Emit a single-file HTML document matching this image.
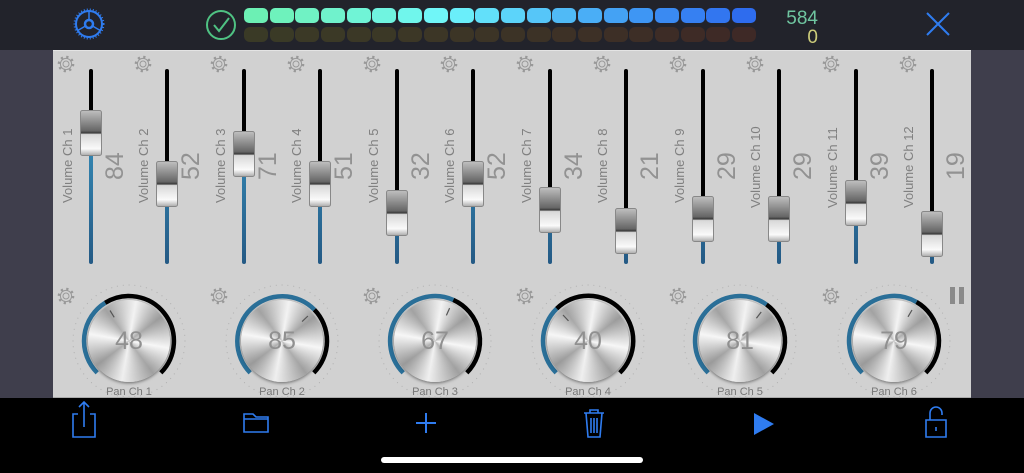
<!DOCTYPE html>
<html><head><meta charset="utf-8"><style>
*{margin:0;padding:0;box-sizing:border-box}
body{width:1024px;height:473px;background:#000;position:relative;overflow:hidden;font-family:"Liberation Sans",sans-serif}
.abs{position:absolute}
.knob{position:absolute;width:82px;height:82px;border-radius:50%;top:300px;
background:radial-gradient(circle,rgba(255,255,255,.25),rgba(255,255,255,0) 60%),conic-gradient(from 10deg,#f2f2f2,#9c9c9c 12%,#f6f6f6 25%,#a0a0a0 37%,#efefef 50%,#9a9a9a 62%,#f6f6f6 75%,#a2a2a2 87%,#f2f2f2);
box-shadow:0 1px 3px rgba(0,0,0,.5);color:#909090;font-size:25px;text-align:center;line-height:82px}
</style></head><body>
<div class="abs" style="left:0;top:0;width:1024px;height:50px;background:#22232b"></div>
<div class="abs" style="left:0;top:50px;width:53px;height:348px;background:#3f3e4c"></div>
<div class="abs" style="left:971px;top:50px;width:53px;height:348px;background:#3f3e4c"></div>
<div class="abs" style="left:53px;top:50px;width:918px;height:348px;background:#d1d1d1;border-top:1px solid #e4e4e4;border-bottom:1px solid #aaa"></div>

<svg class="abs" style="left:0;top:0" width="1024" height="473" viewBox="0 0 1024 473">
<defs>
<linearGradient id="tg" x1="0" y1="0" x2="0" y2="1">
<stop offset="0" stop-color="#c0c0c0"/><stop offset=".45" stop-color="#666"/><stop offset=".5" stop-color="#3a3a3a"/><stop offset=".53" stop-color="#d8d8d8"/><stop offset=".85" stop-color="#fafafa"/><stop offset="1" stop-color="#aaa"/></linearGradient>
<linearGradient id="bl" gradientUnits="userSpaceOnUse" x1="0" y1="100" x2="0" y2="263"><stop offset="0" stop-color="#3a98c4"/><stop offset="1" stop-color="#245a85"/></linearGradient>
<symbol id="th" viewBox="0 0 22 46"><rect x=".5" y=".5" width="21" height="45" rx="2" fill="url(#tg)" stroke="#888"/></symbol>
<symbol id="gr" viewBox="-10 -10 20 20"><circle r="7" fill="none" stroke="#999" stroke-width="2.6" stroke-dasharray="2.2 3.3"/><circle r="5.6" fill="#d1d1d1" stroke="#999" stroke-width="1"/><circle r="3" fill="none" stroke="#999" stroke-width="1"/></symbol>
</defs>
<g>
<rect x="244" y="8" width="24" height="15" rx="5" fill="#6cf0b4"/><rect x="270" y="8" width="24" height="15" rx="5" fill="#6ef2bc"/><rect x="295" y="8" width="24" height="15" rx="5" fill="#70f2c4"/><rect x="321" y="8" width="24" height="15" rx="5" fill="#70f2cc"/><rect x="347" y="8" width="24" height="15" rx="5" fill="#70f4d6"/><rect x="372" y="8" width="24" height="15" rx="5" fill="#70f4e0"/><rect x="398" y="8" width="24" height="15" rx="5" fill="#70f6ec"/><rect x="424" y="8" width="24" height="15" rx="5" fill="#70f6f8"/><rect x="450" y="8" width="24" height="15" rx="5" fill="#6aeefa"/><rect x="475" y="8" width="24" height="15" rx="5" fill="#62e0fa"/><rect x="501" y="8" width="24" height="15" rx="5" fill="#5cd4fa"/><rect x="527" y="8" width="24" height="15" rx="5" fill="#56c6f8"/><rect x="552" y="8" width="24" height="15" rx="5" fill="#50baf6"/><rect x="578" y="8" width="24" height="15" rx="5" fill="#4aaef6"/><rect x="604" y="8" width="24" height="15" rx="5" fill="#44a2f4"/><rect x="629" y="8" width="24" height="15" rx="5" fill="#3e96f4"/><rect x="655" y="8" width="24" height="15" rx="5" fill="#3a8af2"/><rect x="681" y="8" width="24" height="15" rx="5" fill="#3680f2"/><rect x="706" y="8" width="24" height="15" rx="5" fill="#3276f0"/><rect x="732" y="8" width="24" height="15" rx="5" fill="#2e6cee"/>
<rect x="244" y="27" width="24" height="15" rx="6" fill="#3a3a26"/><rect x="270" y="27" width="24" height="15" rx="6" fill="#3a3a26"/><rect x="295" y="27" width="24" height="15" rx="6" fill="#3b3926"/><rect x="321" y="27" width="24" height="15" rx="6" fill="#3b3926"/><rect x="347" y="27" width="24" height="15" rx="6" fill="#3b3826"/><rect x="372" y="27" width="24" height="15" rx="6" fill="#3b3826"/><rect x="398" y="27" width="24" height="15" rx="6" fill="#3c3726"/><rect x="424" y="27" width="24" height="15" rx="6" fill="#3c3626"/><rect x="450" y="27" width="24" height="15" rx="6" fill="#3c3526"/><rect x="475" y="27" width="24" height="15" rx="6" fill="#3c3426"/><rect x="501" y="27" width="24" height="15" rx="6" fill="#3c3326"/><rect x="527" y="27" width="24" height="15" rx="6" fill="#3c3226"/><rect x="552" y="27" width="24" height="15" rx="6" fill="#3d3126"/><rect x="578" y="27" width="24" height="15" rx="6" fill="#3d3026"/><rect x="604" y="27" width="24" height="15" rx="6" fill="#3d2f26"/><rect x="629" y="27" width="24" height="15" rx="6" fill="#3d2e26"/><rect x="655" y="27" width="24" height="15" rx="6" fill="#3d2c26"/><rect x="681" y="27" width="24" height="15" rx="6" fill="#3e2b26"/><rect x="706" y="27" width="24" height="15" rx="6" fill="#3e2a26"/><rect x="732" y="27" width="24" height="15" rx="6" fill="#3e2926"/>
</g>
<g transform="translate(89,24)" fill="none" stroke="#2f7cf0">
<circle r="13" stroke-width="2"/><circle r="14.5" stroke-width="2" stroke-dasharray="1 2"/><circle r="4" stroke-width="2.5"/>
<line x1="0" y1="-4" x2="0" y2="-13" stroke-width="1.5"/><line x1="3.5" y1="2" x2="11.3" y2="6.5" stroke-width="1.5"/><line x1="-3.5" y1="2" x2="-11.3" y2="6.5" stroke-width="1.5"/></g>
<g transform="translate(221,25)" fill="none" stroke="#4fc283" stroke-width="2"><circle r="14"/><path d="M-7,0 L-2,6 L8,-7"/></g>
<text x="818" y="24" font-size="19" fill="#6fc5a0" text-anchor="end">584</text>
<text x="818" y="43" font-size="19" fill="#cccc7a" text-anchor="end">0</text>
<path d="M927,13 L949,35 M949,13 L927,35" stroke="#2f7cf0" stroke-width="2"/>

<use href="#gr" x="56" y="54" width="20" height="20"/><use href="#gr" x="133" y="54" width="20" height="20"/><use href="#gr" x="209" y="54" width="20" height="20"/><use href="#gr" x="286" y="54" width="20" height="20"/><use href="#gr" x="362" y="54" width="20" height="20"/><use href="#gr" x="439" y="54" width="20" height="20"/><use href="#gr" x="515" y="54" width="20" height="20"/><use href="#gr" x="592" y="54" width="20" height="20"/><use href="#gr" x="668" y="54" width="20" height="20"/><use href="#gr" x="745" y="54" width="20" height="20"/><use href="#gr" x="821" y="54" width="20" height="20"/><use href="#gr" x="898" y="54" width="20" height="20"/>
<use href="#gr" x="56" y="286" width="20" height="20"/><use href="#gr" x="209" y="286" width="20" height="20"/><use href="#gr" x="362" y="286" width="20" height="20"/><use href="#gr" x="515" y="286" width="20" height="20"/><use href="#gr" x="668" y="286" width="20" height="20"/><use href="#gr" x="821" y="286" width="20" height="20"/>
<rect x="950" y="287" width="5" height="17" fill="#8a8a8a"/><rect x="959" y="287" width="5" height="17" fill="#8a8a8a"/>

<g stroke-width="4" stroke-linecap="round">
<line x1="91" y1="71" x2="91" y2="133" stroke="#000"/><line x1="91" y1="133" x2="91" y2="262" stroke="url(#bl)"/>
<line x1="167" y1="71" x2="167" y2="184" stroke="#000"/><line x1="167" y1="184" x2="167" y2="262" stroke="url(#bl)"/>
<line x1="244" y1="71" x2="244" y2="154" stroke="#000"/><line x1="244" y1="154" x2="244" y2="262" stroke="url(#bl)"/>
<line x1="320" y1="71" x2="320" y2="184" stroke="#000"/><line x1="320" y1="184" x2="320" y2="262" stroke="url(#bl)"/>
<line x1="397" y1="71" x2="397" y2="213" stroke="#000"/><line x1="397" y1="213" x2="397" y2="262" stroke="url(#bl)"/>
<line x1="473" y1="71" x2="473" y2="184" stroke="#000"/><line x1="473" y1="184" x2="473" y2="262" stroke="url(#bl)"/>
<line x1="550" y1="71" x2="550" y2="210" stroke="#000"/><line x1="550" y1="210" x2="550" y2="262" stroke="url(#bl)"/>
<line x1="626" y1="71" x2="626" y2="231" stroke="#000"/><line x1="626" y1="231" x2="626" y2="262" stroke="url(#bl)"/>
<line x1="703" y1="71" x2="703" y2="219" stroke="#000"/><line x1="703" y1="219" x2="703" y2="262" stroke="url(#bl)"/>
<line x1="779" y1="71" x2="779" y2="219" stroke="#000"/><line x1="779" y1="219" x2="779" y2="262" stroke="url(#bl)"/>
<line x1="856" y1="71" x2="856" y2="203" stroke="#000"/><line x1="856" y1="203" x2="856" y2="262" stroke="url(#bl)"/>
<line x1="932" y1="71" x2="932" y2="234" stroke="#000"/><line x1="932" y1="234" x2="932" y2="262" stroke="url(#bl)"/>
</g>
<use href="#th" x="80" y="110" width="22" height="46"/><use href="#th" x="156" y="161" width="22" height="46"/><use href="#th" x="233" y="131" width="22" height="46"/><use href="#th" x="309" y="161" width="22" height="46"/><use href="#th" x="386" y="190" width="22" height="46"/><use href="#th" x="462" y="161" width="22" height="46"/><use href="#th" x="539" y="187" width="22" height="46"/><use href="#th" x="615" y="208" width="22" height="46"/><use href="#th" x="692" y="196" width="22" height="46"/><use href="#th" x="768" y="196" width="22" height="46"/><use href="#th" x="845" y="180" width="22" height="46"/><use href="#th" x="921" y="211" width="22" height="46"/>
<g font-size="13" fill="#808080">
<text transform="translate(72,203) rotate(-90)">Volume Ch 1</text><text transform="translate(148,203) rotate(-90)">Volume Ch 2</text><text transform="translate(225,203) rotate(-90)">Volume Ch 3</text><text transform="translate(301,203) rotate(-90)">Volume Ch 4</text><text transform="translate(378,203) rotate(-90)">Volume Ch 5</text><text transform="translate(454,203) rotate(-90)">Volume Ch 6</text><text transform="translate(531,203) rotate(-90)">Volume Ch 7</text><text transform="translate(607,203) rotate(-90)">Volume Ch 8</text><text transform="translate(684,203) rotate(-90)">Volume Ch 9</text><text transform="translate(760,208) rotate(-90)">Volume Ch 10</text><text transform="translate(837,208) rotate(-90)">Volume Ch 11</text><text transform="translate(913,208) rotate(-90)">Volume Ch 12</text>
</g>
<g font-size="25" fill="#929292">
<text transform="translate(123,180) rotate(-90)">84</text><text transform="translate(199,180) rotate(-90)">52</text><text transform="translate(276,180) rotate(-90)">71</text><text transform="translate(352,180) rotate(-90)">51</text><text transform="translate(429,180) rotate(-90)">32</text><text transform="translate(505,180) rotate(-90)">52</text><text transform="translate(582,180) rotate(-90)">34</text><text transform="translate(658,180) rotate(-90)">21</text><text transform="translate(735,180) rotate(-90)">29</text><text transform="translate(811,180) rotate(-90)">29</text><text transform="translate(888,180) rotate(-90)">39</text><text transform="translate(964,180) rotate(-90)">19</text>
</g>

<g fill="none" stroke="#b4b4b4" stroke-width="1.2" stroke-linecap="round" stroke-dasharray="0 5.86">
<circle cx="129" cy="341" r="56"/><circle cx="282" cy="341" r="56"/><circle cx="435" cy="341" r="56"/><circle cx="588" cy="341" r="56"/><circle cx="740" cy="341" r="56"/><circle cx="894" cy="341" r="56"/>
</g>
<g fill="none" stroke-width="4.5">
<path d="M97.2,372.8 A45,45 0 0 1 105.2,302.8" stroke="#2a6f98"/><path d="M105.2,302.8 A45,45 0 0 1 160.8,372.8" stroke="#000"/>
<path d="M250.2,372.8 A45,45 0 1 1 314.4,309.7" stroke="#2a6f98"/><path d="M314.4,309.7 A45,45 0 0 1 313.8,372.8" stroke="#000"/>
<path d="M403.2,372.8 A45,45 0 0 1 453.3,299.9" stroke="#2a6f98"/><path d="M453.3,299.9 A45,45 0 0 1 466.8,372.8" stroke="#000"/>
<path d="M556.2,372.8 A45,45 0 0 1 556.7,308.6" stroke="#2a6f98"/><path d="M556.7,308.6 A45,45 0 0 1 619.8,372.8" stroke="#000"/>
<path d="M708.2,372.8 A45,45 0 0 1 766.5,304.6" stroke="#2a6f98"/><path d="M766.5,304.6 A45,45 0 0 1 771.8,372.8" stroke="#000"/>
<path d="M862.2,372.8 A45,45 0 0 1 916.5,302" stroke="#2a6f98"/><path d="M916.5,302 A45,45 0 0 1 925.8,372.8" stroke="#000"/>
</g>
<g font-size="11" fill="#777" text-anchor="middle">
<text x="129" y="395">Pan Ch 1</text><text x="282" y="395">Pan Ch 2</text><text x="435" y="395">Pan Ch 3</text><text x="588" y="395">Pan Ch 4</text><text x="740" y="395">Pan Ch 5</text><text x="894" y="395">Pan Ch 6</text>
</g>
</svg>

<div class="knob" style="left:88px">48</div>
<div class="knob" style="left:241px">85</div>
<div class="knob" style="left:394px">67</div>
<div class="knob" style="left:547px">40</div>
<div class="knob" style="left:699px">81</div>
<div class="knob" style="left:853px">79</div>

<svg class="abs" style="left:0;top:0" width="1024" height="473" viewBox="0 0 1024 473">
<g stroke="#555" stroke-width="1.2">
<line x1="114.2" y1="317.3" x2="110" y2="310.5"/><line x1="302.1" y1="321.6" x2="307.9" y2="316"/><line x1="446.4" y1="315.4" x2="449.6" y2="308.1"/><line x1="568.5" y1="320.9" x2="563" y2="315"/><line x1="756.4" y1="318.3" x2="761.2" y2="312"/><line x1="908" y1="316.8" x2="912" y2="310"/>
</g>
<g fill="none" stroke="#2f7cf0" stroke-width="1.6">
<path d="M78,414 H73 V437 H95 V414 H90 M84,427 V402 M79,407 L84,402 L89,407"/>
<path d="M244,414 V432 H268 V417 H256 L253,414 Z M244,419 H268"/>
<path d="M426,413 V433 M416,423 H436" stroke-width="2"/>
<path d="M584,413 H604 M590,413 V410 H598 V413 M586,413 L588,437 H600 L602,413 M591,418 V433 M594,418 V433 M597,418 V433"/>
<path d="M926,420 H946 V437 H926 Z M930,420 V413 A6,6 0 0 1 942,413 V415 M936,427 V431"/>
</g>
<path d="M754,413 L774,424 L754,435 Z" fill="#2f7cf0"/>
<rect x="381" y="457" width="262" height="6" rx="3" fill="#fff"/>
</svg>
</body></html>
